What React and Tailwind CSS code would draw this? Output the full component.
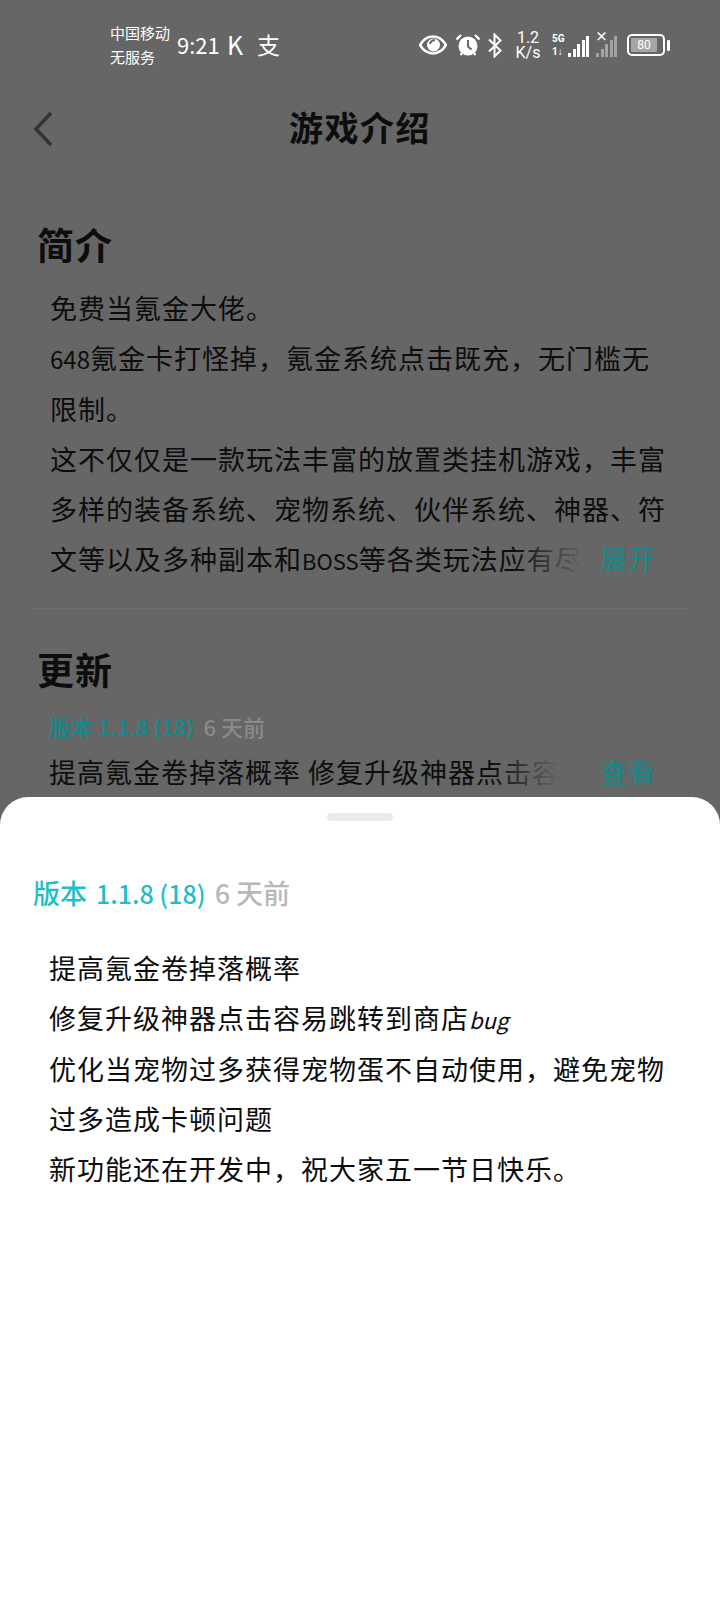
import React from "react";

function Eye() {
  return (
    <svg width="28" height="20" viewBox="0 0 28 20" className="mr-[8px]">
      <path d="M1 10C5 3 9 1.500 14 1.500S23 3 27 10C23 17 19 18.500 14 18.500S5 17 1 10Z" fill="none" stroke="#fff" strokeWidth="2.600" />
      <circle cx="14.500" cy="10" r="6.500" fill="#fff" />
      <path d="M11 9a4 4 0 0 1 5-3.500" fill="none" stroke="#666" strokeWidth="2" />
    </svg>
  );
}

function Alarm() {
  return (
    <svg width="26" height="24" viewBox="0 0 26 24" className="mr-[6px]">
      <circle cx="13" cy="13" r="9.500" fill="#fff" />
      <path d="M13 7v6.500l3.500 3" fill="none" stroke="#666" strokeWidth="2" />
      <path d="M1.500 6.500 6 2M24.500 6.500 20 2M5.500 22l2-2.500M20.500 22l-2-2.500" fill="none" stroke="#fff" strokeWidth="2.400" />
    </svg>
  );
}

function Bluetooth() {
  return (
    <svg width="16" height="25" viewBox="0 0 16 25" className="mr-[11px]">
      <path d="M2 6.500 13.500 17.500 7.500 23.500V1.500L13.500 7.500 2 18.500" fill="none" stroke="#fff" strokeWidth="2" />
    </svg>
  );
}

function Bars({ dim }) {
  const heights = [4, 8, 13, 17, 21];
  return (
    <div className={`flex items-end gap-[1.500px] h-[23px] ${dim ? "opacity-40" : ""}`}>
      {heights.map((h) => (
        <div key={h} className="w-[3px] bg-white" style={{ height: h }} />
      ))}
    </div>
  );
}

function StatusBar() {
  return (
    <div className="h-[90px] flex items-start pt-[21px] pl-[110px] pr-[50px] text-white">
      <div className="w-[66px] text-[15px] leading-[24px] whitespace-nowrap">
        <div>中国移动</div>
        <div>无服务</div>
      </div>
      <div className="ml-[1px] mt-[9px] text-[22px] leading-[28px] w-[50px]">9:21</div>
      <div className="mt-[9px] text-[25px] leading-[28px] w-[30px]">K</div>
      <div className="mt-[9px] text-[23px] leading-[28px]">支</div>
      <div className="ml-auto flex items-center h-[36px] mt-[6px]">
        <Eye />
        <Alarm />
        <Bluetooth />
        <div className="w-[28px] mr-[10px] text-center text-[16px] leading-[15px] font-['Roboto',sans-serif]">
          <div>1.2</div>
          <div>K/s</div>
        </div>
        <div className="mr-[5px] w-[11px] text-[10px] leading-[13px] font-bold font-['Roboto',sans-serif]">
          <div>5G</div>
          <div>1↓</div>
        </div>
        <Bars />
        <div className="relative ml-[7px] mr-[10px]">
          <span className="absolute left-[-1px] top-[-5px] text-[13px] leading-[13px] font-bold">×</span>
          <Bars dim />
        </div>
        <div className="w-[38px] h-[22px] border-2 border-white rounded-[5px] p-[2px] flex">
          <div className="w-[26px] bg-[#a6a6a6] rounded-[1px] text-[12px] leading-[14px] text-center font-['Roboto',sans-serif]">80</div>
        </div>
        <div className="ml-[2px] w-[3px] h-[11px] bg-white rounded-[1px]" />
      </div>
    </div>
  );
}

export default function App() {
  return (
    <div className="relative w-[720px] h-[1600px] overflow-hidden bg-[#666666] text-[#0d0d0d] font-['Noto_Sans_CJK_SC',sans-serif]">
      <StatusBar />

      <div className="relative h-[78px] flex items-center justify-center">
        <svg width="22" height="36" viewBox="0 0 22 36" className="absolute left-[32px] top-[21px]">
          <path d="M19 2 4 18l15 16" fill="none" stroke="#333333" strokeWidth="3.500" />
        </svg>
        <h1 className="text-[34px] leading-[44px] font-bold tracking-[1.500px] mt-[-4px]">游戏介绍</h1>
      </div>

      <div className="px-[37px] pt-[49px]">
        <h2 className="text-[37px] leading-[54px] font-bold tracking-[1px]">简介</h2>
        <div className="mt-[12px] ml-[13px] w-[640px] text-[27px] leading-[50px] tracking-[1px]">
          <p>免费当氪金大佬。</p>
          <p><span className="text-[24px] tracking-[0px]">648</span>氪金卡打怪掉，氪金系统点击既充，无门槛无</p>
          <p>限制。</p>
          <p>这不仅仅是一款玩法丰富的放置类挂机游戏，丰富</p>
          <p>多样的装备系统、宠物系统、伙伴系统、神器、符</p>
          <div className="flex justify-between">
            <p className="relative whitespace-nowrap">
              文等以及多种副本和<span className="text-[22px] tracking-[0px]">BOSS</span>等各类玩法应有尽
              <span className="absolute inset-y-0 right-0 w-[70px] bg-gradient-to-r from-[#66666600] to-[#666666]" />
            </p>
            <span className="mr-[34px] text-[#0f8c8e]">展开</span>
          </div>
        </div>
      </div>

      <div className="mx-[31px] mt-[23px] h-px bg-[#6e6e6e]" />

      <div className="px-[37px] pt-[33px]">
        <h2 className="text-[37px] leading-[54px] font-bold tracking-[1px]">更新</h2>
        <div className="mt-[13px] ml-[12px] text-[22px] leading-[34px] font-medium whitespace-nowrap">
          <span className="text-[#0f8c8e]">版本 1.1.8 (18)</span>
          <span className="text-[#8a8a8a] ml-[9px]">6 天前</span>
        </div>
        <div className="mt-[9px] ml-[12px] flex justify-between text-[27px] leading-[40px] tracking-[1px]">
          <p className="relative whitespace-nowrap">
            提高氪金卷掉落概率 修复升级神器点击容
            <span className="absolute inset-y-0 right-0 w-[70px] bg-gradient-to-r from-[#66666600] to-[#666666]" />
          </p>
          <span className="mr-[27px] text-[#0f8c8e]">查看</span>
        </div>
      </div>

      <div className="absolute inset-x-0 top-[797px] bottom-0 bg-white rounded-t-[28px] text-[#0d0d0d]">
        <div className="mx-auto mt-[16px] w-[66px] h-[8px] rounded-full bg-[#ebebeb]" />
        <div className="mt-[52px] ml-[33px] text-[27px] leading-[40px] font-medium whitespace-nowrap">
          <span className="text-[#1fc0c5]">版本 <span className="text-[25px] ml-[3px]">1.1.8 (18)</span></span>
          <span className="text-[#b8b8b8] ml-[9px]">6 天前</span>
        </div>
        <div className="mt-[30px] ml-[49px] w-[640px] text-[27px] leading-[50px] tracking-[1px]">
          <p>提高氪金卷掉落概率</p>
          <p>修复升级神器点击容易跳转到商店<span className="text-[22px] italic tracking-[0px]">bug</span></p>
          <p>优化当宠物过多获得宠物蛋不自动使用，避免宠物</p>
          <p>过多造成卡顿问题</p>
          <p>新功能还在开发中，祝大家五一节日快乐。</p>
        </div>
      </div>
    </div>
  );
}
